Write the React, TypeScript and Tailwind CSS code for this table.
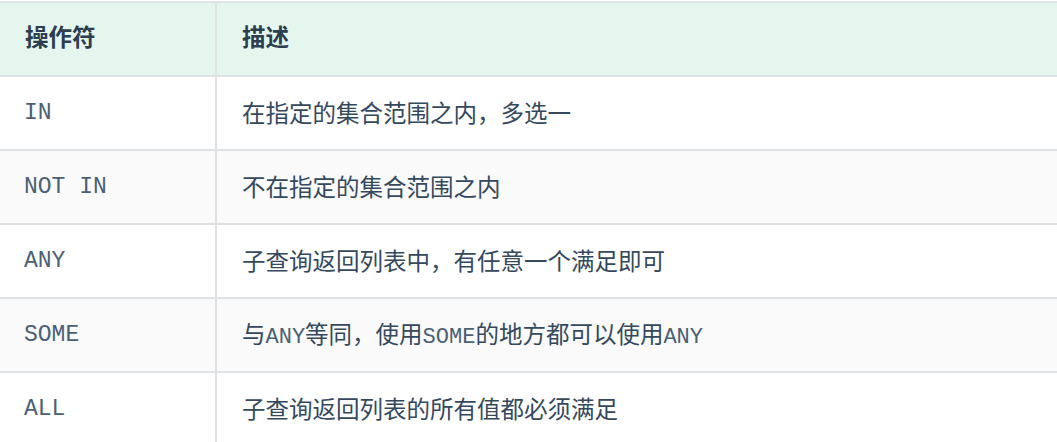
const mono = "font-['Liberation_Mono','DejaVu_Sans_Mono',monospace] text-[#4a6075]";

const rows: { op: string; desc: React.ReactNode }[] = [
  { op: "IN", desc: "在指定的集合范围之内，多选一" },
  { op: "NOT IN", desc: "不在指定的集合范围之内" },
  { op: "ANY", desc: "子查询返回列表中，有任意一个满足即可" },
  {
    op: "SOME",
    desc: (
      <>
        与<code className={`${mono} text-[22px]`}>ANY</code>等同，使用
        <code className={`${mono} text-[22px]`}>SOME</code>的地方都可以使用
        <code className={`${mono} text-[22px]`}>ANY</code>
      </>
    ),
  },
  { op: "ALL", desc: "子查询返回列表的所有值都必须满足" },
];

export default function App() {
  return (
    <div className="h-[442px] w-[1057px] overflow-hidden bg-white pt-px font-['Noto_Sans_CJK_SC','Noto_Sans',sans-serif] text-[23.5px] text-[#34495e]">
      <div className="border-t-2 border-[#dfe2e5]">
        <div className="grid h-[74px] grid-cols-[217px_1fr] border-b-2 border-[#dfe2e5] bg-[#e5f6ee] font-bold text-[#2c3e50]">
          <div className="flex items-center border-r-2 border-[#dfe2e5] pb-[4px] pl-[25px]">操作符</div>
          <div className="flex items-center pb-[4px] pl-[25px]">描述</div>
        </div>
        {rows.map((r, i) => (
          <div
            key={r.op}
            className={`grid h-[74px] grid-cols-[217px_1fr] border-b-2 border-[#dfe2e5] ${i % 2 === 1 ? "bg-[#fafafa]" : "bg-white"}`}
          >
            <div className={`flex items-center border-r-2 border-[#dfe2e5] pl-[24px] text-[23px] ${mono}`}>
              {r.op}
            </div>
            <div className="flex items-center pl-[25px]">
              <span>{r.desc}</span>
            </div>
          </div>
        ))}
      </div>
    </div>
  );
}
